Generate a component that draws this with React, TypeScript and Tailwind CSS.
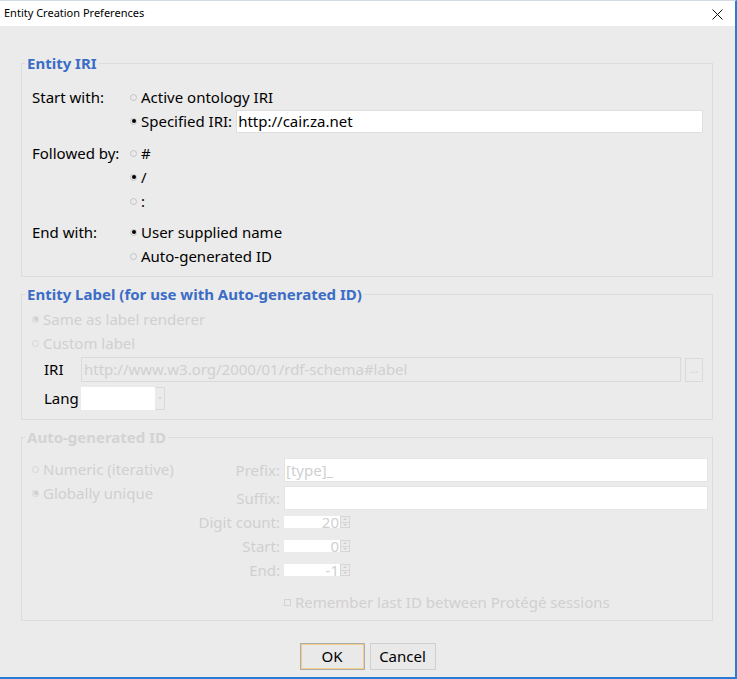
import React from 'react';

const font = "font-['Segoe_UI','Noto_Sans',sans-serif]";

const Radio = ({ checked = false, disabled = false }: { checked?: boolean; disabled?: boolean }) => (
  <span
    className={`flex h-[7px] w-[7px] shrink-0 items-center justify-center rounded-full border ${
      disabled ? 'border-[#d6d6d6]' : 'border-[#c4c4c4]'
    } bg-transparent`}
  >
    {checked && (
      <span className={`h-[4px] w-[4px] rounded-full ${disabled ? 'bg-[#cfcfcf]' : 'bg-black'}`} />
    )}
  </span>
);

const Option = ({
  label,
  checked,
  disabled,
  children,
}: {
  label: string;
  checked?: boolean;
  disabled?: boolean;
  children?: React.ReactNode;
}) => (
  <div className="flex h-[24px] items-center">
    <Radio checked={checked} disabled={disabled} />
    <span className={`ml-[4px] ${disabled ? 'text-[#d0d0d0]' : 'text-black'}`}>{label}</span>
    {children}
  </div>
);

const Spinner = ({ value }: { value: string }) => (
  <div className="flex h-[12px] items-center">
    <div className="flex h-[12px] w-[56px] items-center justify-end overflow-visible bg-white pr-[1px] text-[15px] leading-[12px] text-[#d0d0d0]">
      {value}
    </div>
    <div className="flex h-[12px] w-[10px] flex-col border border-[#d6d6d6]">
      <div className="flex flex-1 items-center justify-center border-b border-[#d6d6d6]">
        <span className="h-0 w-0 border-x-[2px] border-b-[2px] border-x-transparent border-b-[#cfcfcf]" />
      </div>
      <div className="flex flex-1 items-center justify-center">
        <span className="h-0 w-0 border-x-[2px] border-t-[2px] border-x-transparent border-t-[#cfcfcf]" />
      </div>
    </div>
  </div>
);

export default function App() {
  return (
    <div
      className={`${font} flex h-[679px] w-[737px] flex-col border-t border-r-2 border-b-2 border-t-[#d3dbe4] border-r-[#2a7bd3] border-b-[#2a7bd3] bg-[#ebebeb] text-[15px]`}
    >
      {/* Title bar */}
      <div className="flex h-[25px] shrink-0 items-center justify-between bg-white pl-[4px] pr-[12px]">
        <span className="text-[11px] text-black">Entity Creation Preferences</span>
        <svg width="11" height="11" viewBox="0 0 11 11" className="mt-[1px]">
          <path d="M0.5 0.5 L10.5 10.5 M10.5 0.5 L0.5 10.5" stroke="#111" strokeWidth="1" />
        </svg>
      </div>

      <div className="flex flex-1 flex-col pt-[28px]">
        {/* Entity IRI */}
        <fieldset className="ml-[21px] w-[692px] border border-[#dcdcdc] p-0">
          <legend className="ml-[3px] px-[2px] text-[15px] leading-[18px] font-bold text-[#3b6dc7]">
            Entity IRI
          </legend>
          <div className="grid grid-cols-[98px_1fr] pt-[13px] pr-[9px] pb-[8px] pl-[10px]">
            <div className="flex h-[24px] items-center">Start with:</div>
            <div>
              <Option label="Active ontology IRI" />
              <Option label="Specified IRI:" checked>
                <div className="ml-[4px] flex h-[23px] flex-1 items-center border border-[#dedede] bg-white pl-[1px]">
                  http://cair.za.net
                </div>
              </Option>
            </div>

            <div className="mt-[8px] flex h-[24px] items-center">Followed by:</div>
            <div className="mt-[8px]">
              <Option label="#" />
              <Option label="/" checked />
              <Option label=":" />
            </div>

            <div className="mt-[7px] flex h-[24px] items-center">End with:</div>
            <div className="mt-[7px]">
              <Option label="User supplied name" checked />
              <Option label="Auto-generated ID" />
            </div>
          </div>
        </fieldset>

        {/* Entity Label */}
        <fieldset className="mt-[8px] ml-[21px] w-[692px] border border-[#dcdcdc] p-0">
          <legend className="ml-[3px] px-[2px] text-[15px] leading-[18px] font-bold text-[#3b6dc7]">
            Entity Label (for use with Auto-generated ID)
          </legend>
          <div className="flex flex-col pt-[4px] pr-[9px] pb-[9px] pl-[10px]">
            <Option label="Same as label renderer" checked disabled />
            <Option label="Custom label" disabled />
            <div className="mt-[2px] flex h-[25px] items-center pl-[12px]">
              <span className="w-[37px]">IRI</span>
              <div className="flex h-[25px] flex-1 items-center border border-[#dadada] pl-[2px] text-[#d0d0d0]">
                http://www.w3.org/2000/01/rdf-schema#label
              </div>
              <div className="ml-[4px] flex h-[24px] w-[18px] items-center justify-center border border-[#dadada] text-[10px] text-[#cfcfcf]">
                ...
              </div>
            </div>
            <div className="mt-[4px] flex h-[24px] items-center pl-[12px]">
              <span className="w-[37px]">Lang</span>
              <div className="h-[23px] w-[74px] bg-white" />
              <div className="flex h-[23px] w-[10px] items-center justify-center border border-l-0 border-[#dadada]">
                <span className="h-0 w-0 border-x-[2px] border-t-[2px] border-x-transparent border-t-[#cfcfcf]" />
              </div>
            </div>
          </div>
        </fieldset>

        {/* Auto-generated ID */}
        <fieldset className="mt-[8px] ml-[21px] w-[692px] border border-[#dcdcdc] p-0">
          <legend className="ml-[3px] px-[2px] text-[15px] leading-[18px] font-bold text-[#d3d3d3]">
            Auto-generated ID
          </legend>
          <div className="flex pt-[11px] pr-[4px] pb-[6px]">
            <div className="w-[168px] pl-[10px]">
              <Option label="Numeric (iterative)" disabled />
              <Option label="Globally unique" checked disabled />
            </div>
            <div className="grid flex-1 grid-cols-[90px_1fr] items-center gap-x-[4px] pt-[1px] text-[#d0d0d0]">
              <span className="text-right">Prefix:</span>
              <div className="flex h-[24px] items-center border border-[#e4e4e4] bg-white pl-[1px]">[type]_</div>

              <span className="mt-[4px] text-right">Suffix:</span>
              <div className="mt-[4px] h-[24px] border border-[#e4e4e4] bg-white" />

              <span className="flex h-[24px] items-center justify-end">Digit count:</span>
              <Spinner value="20" />

              <span className="flex h-[24px] items-center justify-end">Start:</span>
              <Spinner value="0" />

              <span className="flex h-[24px] items-center justify-end">End:</span>
              <Spinner value="-1" />

              <span className="mt-[8px] h-[24px]" />
              <div className="mt-[8px] flex h-[24px] items-center">
                <span className="h-[7px] w-[7px] border border-[#d3d3d3]" />
                <span className="ml-[4px]">Remember last ID between Protégé sessions</span>
              </div>
            </div>
          </div>
        </fieldset>

        {/* Buttons */}
        <div className="mt-[22px] flex justify-center gap-[5px]">
          <button className="h-[27px] w-[65px] border border-[#adadad] bg-[#e9e9e9] shadow-[inset_0_0_0_1px_#f2cf87] text-black">
            OK
          </button>
          <button className="h-[27px] w-[66px] border border-[#cfcfcf] bg-[#e9e9e9] text-black">
            Cancel
          </button>
        </div>
      </div>
    </div>
  );
}
